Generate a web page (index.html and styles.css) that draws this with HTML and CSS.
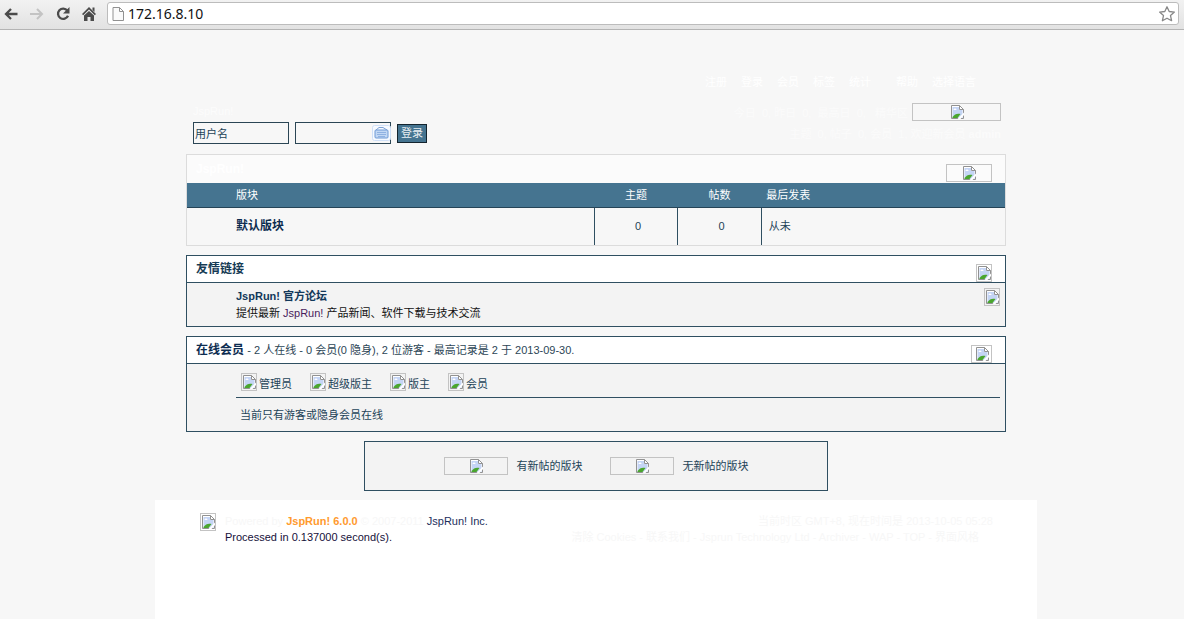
FILE: index.html
```html
<!DOCTYPE html>
<html lang="zh-CN">
<head>
<meta charset="utf-8">
<title>JspRun!</title>
<link rel="stylesheet" href="styles.css">
</head>
<body>
<svg class="defs" aria-hidden="true">
  <symbol id="broken" viewBox="0 0 14 14">
    <path d="M1.500.5h8l4 4v9h-12z" fill="#fff" stroke="#929292"/>
    <path d="M2.500 2h6.500v3h3.500v8h-10z" fill="#c5d5f5"/>
    <path d="M3.500 5c0-2 3-2 3 0z" fill="#fff"/>
    <path d="M2.500 13v-1c2-3 5-4 8-3l-3 4z" fill="#4aa62e"/>
    <path d="M9.500.5v4h4z" fill="#fff" stroke="#929292"/>
    <path d="M7.500 14L14 7.500v2.500l-3.500 4z" fill="#fff"/>
  </symbol>
</svg>

<header class="toolbar">
  <button class="tool" aria-label="Back"><svg width="16" height="16" viewBox="0 0 16 16"><path d="M14.500 8H3M8 3L3 8l5 5" fill="none" stroke="#4b4b4b" stroke-width="2.300"/></svg></button>
  <button class="tool" aria-label="Forward"><svg width="16" height="16" viewBox="0 0 16 16"><path d="M1 8h12M8 3l5 5-5 5" fill="none" stroke="#c3c3c3" stroke-width="2"/></svg></button>
  <button class="tool" aria-label="Reload"><svg width="16" height="16" viewBox="0 0 16 16"><path d="M12.300 4.500A5.200 5.200 0 1 0 13 9.800" fill="none" stroke="#4b4b4b" stroke-width="2.300"/><path d="M14.500 1v6.500H8z" fill="#4b4b4b"/></svg></button>
  <button class="tool" aria-label="Home"><svg width="16" height="16" viewBox="0 0 16 16"><path d="M8 1l7 7-1.200 1.200L8 3.600 2.200 9.200 1 8zM11.500 1.500h2V6l-2-2zM3 9.500L8 5l5 4.500V15H9.500v-4h-3v4H3z" fill="#4b4b4b"/></svg></button>
  <div class="omnibox">
    <svg width="12" height="14" viewBox="0 0 12 14"><path d="M1 .5h6.500l4 4v9H1zM7.500.5v4h4" fill="#fafafa" stroke="#919191"/></svg>
    <input class="address" aria-label="Address" value="172.16.8.10">
    <button class="star" aria-label="Bookmark"><svg width="16" height="16" viewBox="0 0 16 16"><path d="M8 .8l2.200 4.700 5.200.6-3.900 3.500 1.100 5.100L8 12.200l-4.600 2.500 1.100-5.100L.6 6.100l5.200-.6z" fill="#fff" stroke="#888" stroke-width="1.300" stroke-linejoin="round"/></svg></button>
  </div>
</header>

<main class="page">
  <nav class="menu">
    <a href="#">注册</a><a href="#">登录</a><a href="#">会员</a><a href="#">标签</a><a href="#">统计</a><a href="#" class="help">帮助</a><a href="#">选择语言</a>
  </nav>

  <div class="top">
    <form class="login">
      <a class="crumb" href="#">JspRun!</a>
      <div class="fields">
        <input class="field" type="text" aria-label="用户名" value="用户名">
        <span class="password">
          <input class="field" type="password" aria-label="密码">
          <svg class="keyboard" width="19" height="16" viewBox="0 0 19 16"><rect x=".5" y=".5" width="18" height="15" rx="2" fill="#f6faff" stroke="#cfe0f8"/><path d="M4 5L7 2.500h4L15 5" fill="none" stroke="#7ca1d6"/><rect x="3" y="5" width="13" height="8" rx="1" fill="#c2d8f4" stroke="#6f9ad5"/><path d="M5 7.500h9M5 9.500h9M6 11.500h7" stroke="#8fb2e2"/></svg>
        </span>
        <button class="submit" type="button">登录</button>
      </div>
    </form>
    <div class="stats">
      <div class="line">今日 &nbsp;0, 昨日 &nbsp;0, &nbsp;最高日 &nbsp;0, &nbsp; 精华区 <span class="missing wide"><svg width="14" height="14"><use href="#broken"/></svg></span></div>
      <div class="line"><span>主题 &nbsp;0, 帖子 &nbsp;0, 会员 &nbsp;1, 欢迎新会员 <b>admin</b></span></div>
    </div>
  </div>

  <section class="card forum">
    <div class="head"><h3><a href="#">JspRun!</a></h3><span class="missing mid"><svg width="14" height="14"><use href="#broken"/></svg></span></div>
    <table>
      <colgroup><col><col class="count"><col class="count"><col class="last"></colgroup>
      <thead><tr><th class="name">版块</th><th>主题</th><th>帖数</th><th class="latest">最后发表</th></tr></thead>
      <tbody><tr><td class="name"><a href="#">默认版块</a></td><td class="number">0</td><td class="number">0</td><td class="latest">从未</td></tr></tbody>
    </table>
  </section>

  <section class="card dark">
    <div class="head"><h3>友情链接</h3><span class="missing"><svg width="14" height="14"><use href="#broken"/></svg></span></div>
    <div class="friend">
      <div><a href="#">JspRun! 官方论坛</a><p>提供最新 <span class="brand">JspRun!</span> 产品新闻、软件下载与技术交流</p></div>
      <span class="missing"><svg width="14" height="14"><use href="#broken"/></svg></span>
    </div>
  </section>

  <section class="card dark">
    <div class="head"><h3><a href="#">在线会员</a> <small>- 2 人在线 - 0 会员(0 隐身), 2 位游客 - 最高记录是 2 于 2013-09-30.</small></h3><span class="missing small"><svg width="14" height="14"><use href="#broken"/></svg></span></div>
    <div class="online">
      <ul class="roles">
        <li><span class="missing"><svg width="14" height="14"><use href="#broken"/></svg></span>管理员</li>
        <li><span class="missing"><svg width="14" height="14"><use href="#broken"/></svg></span>超级版主</li>
        <li><span class="missing"><svg width="14" height="14"><use href="#broken"/></svg></span>版主</li>
        <li><span class="missing"><svg width="14" height="14"><use href="#broken"/></svg></span>会员</li>
      </ul>
      <p class="guests">当前只有游客或隐身会员在线</p>
    </div>
  </section>

  <div class="legend">
    <span class="key"><span class="missing tag"><svg width="14" height="14"><use href="#broken"/></svg></span>有新帖的版块</span>
    <span class="key"><span class="missing tag"><svg width="14" height="14"><use href="#broken"/></svg></span>无新帖的版块</span>
  </div>

  <footer class="footer">
    <div class="credits">
      <span class="missing"><svg width="14" height="14"><use href="#broken"/></svg></span>
      <div>
        <p><span class="faint">Powered by</span> <a class="version" href="#">JspRun! 6.0.0</a> <span class="faint">© 2007-2011</span> <a href="#">JspRun! Inc.</a></p>
        <p class="timing">Processed in 0.137000 second(s).</p>
      </div>
    </div>
    <div class="links">
      <p>当前时区 GMT+8, 现在时间是 2013-10-05 05:28</p>
      <p class="list">清除 Cookies - 联系我们 - Jsprun Technology Ltd - Archiver - WAP - TOP - 界面风格</p>
    </div>
  </footer>
</main>
</body>
</html>
```
FILE: styles.css
```css
* { box-sizing: border-box; }
body {
  margin: 0;
  min-height: 100vh;
  display: flex;
  flex-direction: column;
  background: #f7f7f7;
  color: #1d4358;
  font: 11px/16px "Liberation Sans", "Noto Sans CJK SC", sans-serif;
}
a { color: inherit; text-decoration: none; }
p, h3, ul { margin: 0; padding: 0; }
button, input { font: inherit; color: inherit; }
svg { display: block; flex: none; }
.defs { position: absolute; width: 0; height: 0; }

.toolbar {
  display: flex;
  align-items: center;
  gap: 10px;
  height: 30px;
  padding: 0 5px 2px 3px;
  background: linear-gradient(#f2f2f2, #e2e2e2);
  border-bottom: 1px solid #b4b4b4;
}
.tool, .star { padding: 0; border: 0; background: none; }
.omnibox {
  flex: 1;
  display: flex;
  align-items: center;
  gap: 4px;
  height: 23px;
  padding: 0 3px 0 4px;
  background: #fff;
  border: 1px solid #bcbcbc;
  border-radius: 3px;
}
.address {
  flex: 1;
  min-width: 0;
  padding: 0;
  border: 0;
  outline: 0;
  background: none;
  color: #111;
  font: 14px/20px "Noto Sans", "Open Sans", sans-serif;
}

.page {
  flex: 1;
  display: flex;
  flex-direction: column;
  margin: 0 147px 0 155px;
}
.menu {
  display: flex;
  justify-content: flex-end;
  gap: 14px;
  padding: 44px 61px 0 0;
  color: #fff;
}
.help { margin-left: 11px; }
.top {
  display: flex;
  justify-content: space-between;
  margin: 13px 36px 0 38px;
}
.crumb { display: block; color: #fcfcfc; }
.fields { display: flex; align-items: center; gap: 6px; margin-top: 3px; }
.field {
  display: block;
  width: 96px;
  height: 22px;
  padding: 0 1px;
  border: 1px solid #2b4655;
  border-radius: 0;
  background: #f7f7f7;
}
.password { position: relative; }
.keyboard { position: absolute; right: 0; top: 3px; }
.submit {
  height: 19px;
  padding: 0 3px;
  border: 1px solid #14242e;
  background: #457490;
  color: #e8eef2;
  line-height: 16px;
}
.stats { color: #fbfbfb; text-align: right; }
.stats .line {
  display: flex;
  justify-content: flex-end;
  align-items: flex-end;
  gap: 4px;
  height: 18px;
}
.stats .line + .line { margin-top: 3px; }

.missing {
  flex: none;
  display: inline-flex;
  align-items: center;
  justify-content: center;
  width: 16px;
  height: 18px;
  border: 1px solid #c3c3c3;
}
.wide { width: 89px; }
.mid { width: 46px; }
.small { width: 21px; }
.tag { width: 64px; }

.card { margin: 0 31px 9px; border: 1px solid #2f4f61; }
.dark { background: #f3f3f3; }
.forum { margin-top: 10px; border-color: #dcdcdc; background: #f7f7f7; }
.head {
  display: flex;
  justify-content: space-between;
  align-items: flex-end;
  height: 27px;
  padding: 0 13px 0 9px;
  background: #fff;
  border-bottom: 1px solid #2f4f61;
}
.head h3 { align-self: center; font-size: 12px; color: #163b55; }
.head h3 a { color: #0c2c50; }
.head small { font-size: 11px; font-weight: normal; color: #2d4656; }
.forum .head { height: 28px; background: #fbfbfb; border-bottom-color: #fbfbfb; }
.forum h3 a { color: #fff; }

table { width: 100%; table-layout: fixed; border-collapse: collapse; }
.count { width: 10.2%; }
.last { width: 29.8%; }
th, td { padding: 0; text-align: center; }
th {
  height: 24px;
  background: #457490;
  color: #fff;
  font-weight: normal;
  border-bottom: 1px solid #254457;
}
td { height: 38px; border-left: 1px solid #2f4f61; }
td.number { padding-left: 4px; }
.name { padding-left: 49px; text-align: left; border-left: 0; }
td.name { font-size: 12px; font-weight: bold; color: #0c2c50; }
.latest { padding-left: 5px; text-align: left; }
td.latest { padding-left: 7px; }

.friend {
  display: flex;
  justify-content: space-between;
  padding: 5px 5px 5px 49px;
}
.friend a { font-weight: bold; color: #12385a; }
.friend p { margin-top: 1px; color: #111; }
.brand { color: #4a1c5c; }

.online { padding: 9px 5px 8px 49px; }
.roles {
  display: flex;
  gap: 18px;
  padding: 0 0 6px 5px;
  list-style: none;
  border-bottom: 1px solid #2f4f61;
}
.roles li { display: flex; align-items: flex-end; gap: 2px; line-height: 14px; }
.guests { padding: 9px 0 0 4px; }

.legend {
  display: flex;
  justify-content: center;
  align-items: center;
  gap: 27px;
  width: 464px;
  max-width: 100%;
  height: 50px;
  margin: 0 auto 9px;
  border: 1px solid #2f4f61;
  background: #f3f3f3;
}
.key { display: flex; align-items: center; gap: 9px; }

.footer {
  flex: 1;
  display: flex;
  justify-content: space-between;
  align-items: flex-start;
  padding: 13px 44px 13px 45px;
  background: #fff;
}
.credits { display: flex; gap: 9px; color: #1c2f5c; }
.faint, .links { color: #f7f7f7; }
.version { color: #ff9a2e; font-weight: bold; }
.timing { color: #16103a; }
.links { text-align: right; }
.links .list { padding-right: 14px; }
```
